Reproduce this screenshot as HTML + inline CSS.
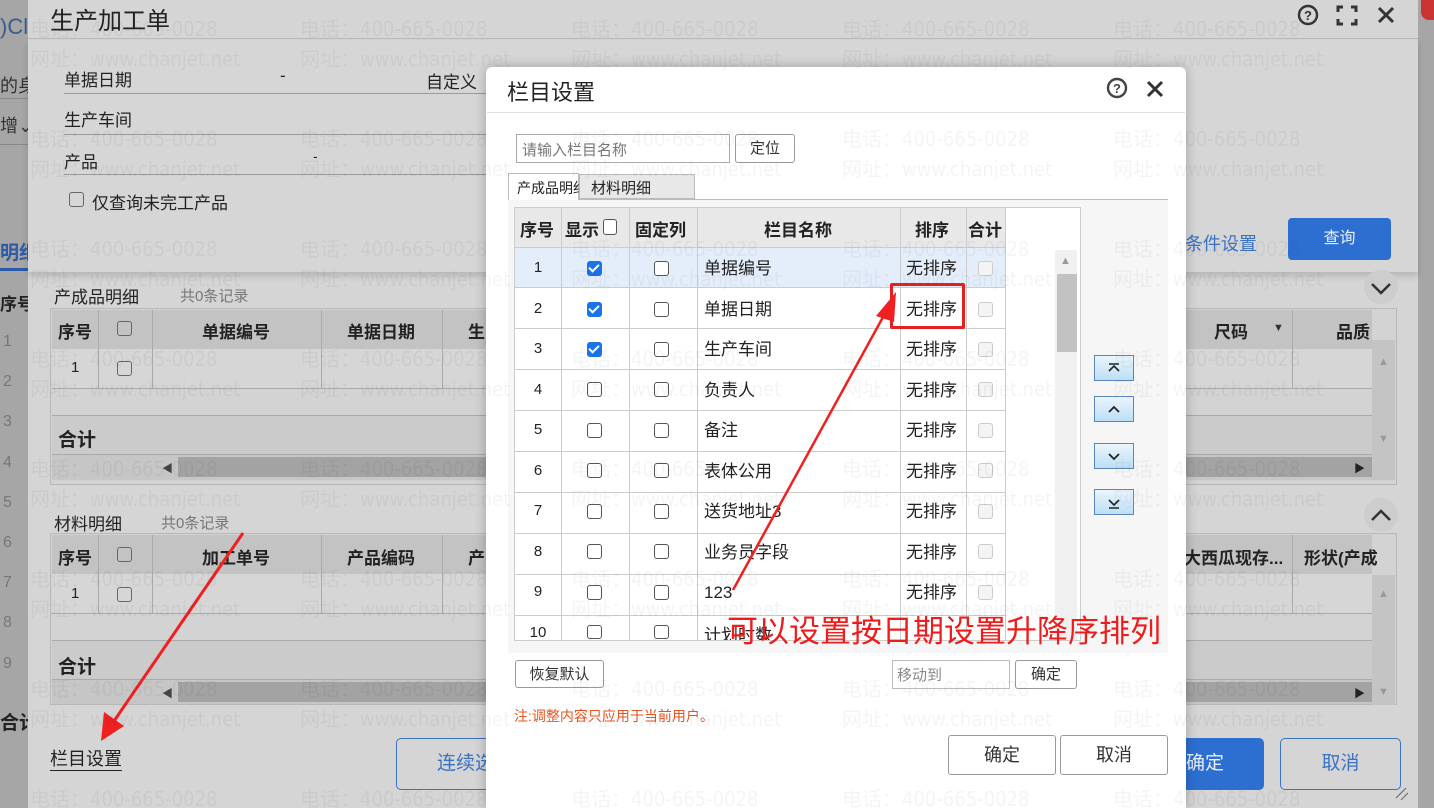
<!DOCTYPE html>
<html><head><meta charset="utf-8"><style>
*{box-sizing:border-box;margin:0;padding:0}
html,body{width:1434px;height:808px;overflow:hidden}
body{position:relative;background:#9c9c9c;font-family:"Liberation Sans","Noto Sans CJK SC",sans-serif;color:#222}
.a{position:absolute;white-space:nowrap}
.cb{position:absolute;width:15px;height:15px;border:1.5px solid #555;border-radius:3px;background:#fff}
.cbd{border-color:#666;background:transparent}
.ck{position:absolute;width:15px;height:15px;border-radius:3px;background:#1a73e8}
.ck:after{content:"";position:absolute;left:4px;top:1px;width:4px;height:8px;border:solid #fff;border-width:0 2px 2px 0;transform:rotate(45deg)}
.cl{position:absolute;width:15px;height:15px;border:1px solid #ccc;border-radius:3px;background:#f4f4f4}
.hd{font-weight:bold;font-size:17px}
.btn{position:absolute;border:1px solid #999;border-radius:3px;background:#fff;text-align:center;font-size:15px;color:#333}
.mv{position:absolute;left:1094px;width:40px;height:26px;border:1px solid #5a86b8;background:linear-gradient(#eaf5fd,#bcdff6)}
</style></head><body>
<div class="a" style="left:0;top:0;width:28px;height:808px;background:#a6a6a6"></div>
<div class="a" style="left:0;top:14px;font-size:22px;color:#3a5c8c">)Cl</div>
<div class="a" style="left:0;top:72px;font-size:18px;color:#333">的身</div>
<div class="a" style="left:0;top:112px;font-size:18px;color:#333">增⌄</div>
<div class="a" style="left:0;top:98px;width:28px;height:1px;background:#888"></div>
<div class="a" style="left:0;top:144px;width:28px;height:1px;background:#888"></div>
<div class="a" style="left:0;top:238px;font-size:19px;color:#2a5aa8;font-weight:bold">明细</div>
<div class="a" style="left:0;top:268px;width:28px;height:3px;background:#2a5aa8"></div>
<div class="a" style="left:0;top:290px;font-size:17px;font-weight:bold">序号</div>
<div class="a" style="left:3px;top:322px;font-size:16px;color:#777;line-height:40.2px">1<br>2<br>3<br>4<br>5<br>6<br>7<br>8<br>9</div>
<div class="a" style="left:0;top:708px;font-size:19px;font-weight:bold">合计</div>
<div class="a" style="left:1418px;top:0;width:16px;height:808px;background:#a6a6a6"></div>
<div class="a" style="left:1421px;top:0;width:13px;height:20px;background:#c33;border-radius:0 0 0 8px"></div>
<div class="a" style="left:28px;top:0;width:1390px;height:808px;background:#d5d5d5"></div>
<div class="a" style="left:50px;top:1px;font-size:24px;color:#222">生产加工单</div>
<div class="a" style="left:28px;top:38px;width:1390px;height:1px;background:#b9b9b9"></div>
<svg class="a" style="left:1294px;top:3px" width="110" height="26" viewBox="0 0 110 26"><circle cx="14" cy="12" r="9" fill="none" stroke="#333" stroke-width="2.4"/><text x="14" y="17" font-size="13" font-weight="bold" text-anchor="middle" fill="#333" font-family="Liberation Sans">?</text><path d="M44 9V4h5M57 4h5v5M62 16v5h-5M49 21h-5v-5" fill="none" stroke="#333" stroke-width="3"/><path d="M85 5l14 14M99 5L85 19" stroke="#333" stroke-width="3"/></svg>
<div class="a" style="left:28px;top:40px;width:1390px;height:232px;background:#d6d6d6;box-shadow:0 4px 6px rgba(0,0,0,.15)"></div>
<div class="a" style="left:64px;top:66px;font-size:17px">单据日期</div>
<div class="a" style="left:280px;top:66px;font-size:17px">-</div>
<div class="a" style="left:426px;top:68px;font-size:17px">自定义</div>
<div class="a" style="left:64px;top:93px;width:422px;height:1px;background:#9a9a9a"></div>
<div class="a" style="left:64px;top:106px;font-size:17px">生产车间</div>
<div class="a" style="left:64px;top:134px;width:422px;height:1px;background:#9a9a9a"></div>
<div class="a" style="left:64px;top:148px;font-size:17px">产品</div>
<div class="a" style="left:313px;top:148px;font-size:14px">-</div>
<div class="a" style="left:64px;top:174px;width:422px;height:1px;background:#9a9a9a"></div>
<div class="cb cbd" style="left:69px;top:192px"></div>
<div class="a" style="left:92px;top:189px;font-size:17px">仅查询未完工产品</div>
<div class="a" style="left:1185px;top:230px;font-size:18px;color:#3b73c4">条件设置</div>
<div class="a" style="left:1288px;top:218px;width:103px;height:42px;background:#2c6fd1;border-radius:4px;color:#e8eef8;font-size:16px;text-align:center;line-height:42px">查询</div>
<div class="a" style="left:1364px;top:498px;width:34px;height:34px;border-radius:17px;background:#cdcdcd"></div>
<svg class="a" style="left:1369px;top:505px" width="24" height="20"><path d="M3 15l9-9 9 9" fill="none" stroke="#333" stroke-width="2.5"/></svg>
<div class="a" style="left:1364px;top:270px;width:34px;height:34px;border-radius:17px;background:#cdcdcd"></div>
<svg class="a" style="left:1369px;top:278px" width="24" height="20"><path d="M3 6l9 9 9-9" fill="none" stroke="#333" stroke-width="2.5"/></svg>
<div class="a" style="left:54px;top:283px;font-size:17px">产成品明细</div>
<div class="a" style="left:180px;top:285px;font-size:15px;color:#777">共0条记录</div>
<div class="a" style="left:50px;top:308px;width:1347px;height:177px;border:1px solid #b8b8b8;background:#d3d3d3"></div>
<div class="a" style="left:52px;top:310px;width:1320px;height:39px;background:#c3c3c3"></div>
<div class="a" style="left:52px;top:349px;width:1320px;height:40px;background:#d6d6d6;border-bottom:1px solid #aaa"></div>
<div class="a" style="left:52px;top:415px;width:1320px;height:40px;background:#cbcbcb;border-top:1px solid #aaa;border-bottom:1px solid #aaa"></div>
<div class="a" style="left:52px;top:455px;width:1320px;height:25px;background:#c6c6c6"></div>
<div class="a" style="left:178px;top:457px;width:1194px;height:20px;background:#a3a3a3"></div>
<div class="a" style="left:162px;top:460px;font-size:11px;color:#444">◀</div>
<div class="a" style="left:1354px;top:460px;font-size:11px;color:#222">▶</div>
<div class="a" style="left:1372px;top:340px;width:23px;height:140px;background:#c4c4c4"></div>
<div class="a" style="left:1378px;top:356px;font-size:11px;color:#999">▲</div>
<div class="a" style="left:1378px;top:433px;font-size:11px;color:#999">▼</div>
<div class="a" style="left:98px;top:310px;width:1px;height:79px;background:#aaa"></div>
<div class="a" style="left:152px;top:310px;width:1px;height:79px;background:#aaa"></div>
<div class="a" style="left:321px;top:310px;width:1px;height:79px;background:#aaa"></div>
<div class="a" style="left:442px;top:310px;width:1px;height:79px;background:#aaa"></div>
<div class="a" style="left:1292px;top:310px;width:1px;height:79px;background:#aaa"></div>
<div class="a hd" style="left:58px;top:318px">序号</div>
<div class="cb cbd" style="left:117px;top:321px"></div>
<div class="a hd" style="left:202px;top:318px">单据编号</div>
<div class="a hd" style="left:347px;top:318px">单据日期</div>
<div class="a hd" style="left:468px;top:318px">生</div>
<div class="a hd" style="left:1214px;top:318px">尺码</div>
<div class="a" style="left:1273px;top:322px;font-size:11px;color:#333">▼</div>
<div class="a hd" style="left:1336px;top:318px">品质</div>
<div class="a" style="left:71px;top:359px;font-size:15px">1</div>
<div class="cb cbd" style="left:117px;top:361px"></div>
<div class="a hd" style="left:58px;top:425px;font-size:19px">合计</div>
<div class="a" style="left:54px;top:510px;font-size:17px">材料明细</div>
<div class="a" style="left:161px;top:512px;font-size:15px;color:#777">共0条记录</div>
<div class="a" style="left:50px;top:533px;width:1347px;height:172px;border:1px solid #b8b8b8;background:#d3d3d3"></div>
<div class="a" style="left:52px;top:535px;width:1320px;height:39px;background:#c3c3c3"></div>
<div class="a" style="left:52px;top:574px;width:1320px;height:40px;background:#d6d6d6;border-bottom:1px solid #aaa"></div>
<div class="a" style="left:52px;top:640px;width:1320px;height:40px;background:#cbcbcb;border-top:1px solid #aaa;border-bottom:1px solid #aaa"></div>
<div class="a" style="left:52px;top:680px;width:1320px;height:24px;background:#c6c6c6"></div>
<div class="a" style="left:178px;top:682px;width:1194px;height:20px;background:#a3a3a3"></div>
<div class="a" style="left:162px;top:685px;font-size:11px;color:#444">◀</div>
<div class="a" style="left:1354px;top:685px;font-size:11px;color:#222">▶</div>
<div class="a" style="left:1372px;top:575px;width:23px;height:130px;background:#c4c4c4"></div>
<div class="a" style="left:1378px;top:588px;font-size:11px;color:#999">▲</div>
<div class="a" style="left:1378px;top:686px;font-size:11px;color:#999">▼</div>
<div class="a" style="left:98px;top:535px;width:1px;height:79px;background:#aaa"></div>
<div class="a" style="left:152px;top:535px;width:1px;height:79px;background:#aaa"></div>
<div class="a" style="left:321px;top:535px;width:1px;height:79px;background:#aaa"></div>
<div class="a" style="left:442px;top:535px;width:1px;height:79px;background:#aaa"></div>
<div class="a" style="left:1292px;top:535px;width:1px;height:79px;background:#aaa"></div>
<div class="a hd" style="left:58px;top:544px">序号</div>
<div class="cb cbd" style="left:117px;top:547px"></div>
<div class="a hd" style="left:202px;top:544px">加工单号</div>
<div class="a hd" style="left:347px;top:544px">产品编码</div>
<div class="a hd" style="left:468px;top:544px">产</div>
<div class="a hd" style="left:1184px;top:544px">大西瓜现存...</div>
<div class="a hd" style="left:1304px;top:544px">形状(产成</div>
<div class="a" style="left:71px;top:585px;font-size:15px">1</div>
<div class="cb cbd" style="left:117px;top:587px"></div>
<div class="a hd" style="left:58px;top:652px;font-size:19px">合计</div>
<div class="a" style="left:50px;top:748px;font-size:18px;border-bottom:1px solid #222;line-height:22px">栏目设置</div>
<div class="a" style="left:396px;top:738px;width:120px;height:52px;border:1px solid #3b73c4;border-radius:5px;color:#3b73c4;font-size:19px;line-height:50px;padding-left:40px">连续选</div>
<div class="a" style="left:1150px;top:738px;width:114px;height:52px;background:#2c6fd1;border-radius:5px;color:#e8eef8;font-size:19px;line-height:52px;padding-left:36px">确定</div>
<div class="a" style="left:1280px;top:738px;width:121px;height:52px;border:1px solid #3b73c4;border-radius:5px;color:#3b73c4;font-size:19px;line-height:50px;text-align:center">取消</div>
<!-- inner modal -->
<div class="a" style="left:486px;top:67px;width:700px;height:741px;background:#fff;border-radius:6px 6px 0 0;box-shadow:0 0 12px rgba(0,0,0,.25)"></div>
<div class="a" style="left:507px;top:75px;font-size:22px;color:#222">栏目设置</div>
<div class="a" style="left:487px;top:112px;width:698px;height:1px;background:#e2e2e2"></div>
<svg class="a" style="left:1104px;top:76px" width="70" height="26"><circle cx="13" cy="12" r="9" fill="none" stroke="#444" stroke-width="2.4"/><text x="13" y="17" font-size="13" font-weight="bold" text-anchor="middle" fill="#444" font-family="Liberation Sans">?</text><path d="M44 6l14 14M58 6L44 20" stroke="#333" stroke-width="3"/></svg>
<div class="a" style="left:516px;top:134px;width:214px;height:29px;border:1px solid #aaa;font-size:15px;color:#777;padding:4px 5px">请输入栏目名称</div>
<div class="btn" style="left:735px;top:134px;width:60px;height:29px;line-height:27px">定位</div>
<div class="a" style="left:508px;top:199px;width:660px;height:454px;background:#f6f6f6"></div>
<div class="a" style="left:508px;top:199px;width:660px;height:1px;background:#bbb"></div>
<div class="a" style="left:508px;top:173px;width:71px;height:27px;background:#fff;border:1px solid #bbb;border-bottom:none;font-size:14px;padding:4px 0 0 8px">产成品明细</div>
<div class="a" style="left:579px;top:174px;width:116px;height:25px;background:#e8e8e8;border:1px solid #bbb;font-size:15px;padding:2px 0 0 11px">材料明细</div>
<div class="a" style="left:514px;top:207px;width:567px;height:434px;border:1px solid #ccc;background:#fff"></div>
<div class="a" style="left:515px;top:208px;width:490px;height:40px;background:#e8e8e8"></div>
<div class="a" style="left:515px;top:248px;width:490px;height:40px;background:#e4eefb"></div>
<div class="a" style="left:515px;top:247px;width:490px;height:393px;background:repeating-linear-gradient(#0000 0 40px,#ccc 40px 41px)"></div>
<div class="a" style="left:561px;top:208px;width:1px;height:432px;background:#ccc"></div>
<div class="a" style="left:629px;top:208px;width:1px;height:432px;background:#ccc"></div>
<div class="a" style="left:697px;top:208px;width:1px;height:432px;background:#ccc"></div>
<div class="a" style="left:900px;top:208px;width:1px;height:432px;background:#ccc"></div>
<div class="a" style="left:966px;top:208px;width:1px;height:432px;background:#ccc"></div>
<div class="a" style="left:1005px;top:208px;width:1px;height:432px;background:#ccc"></div>
<div class="a" style="left:515px;top:247px;width:490px;height:1px;background:#ccc"></div>
<div class="a hd" style="left:520px;top:216px">序号</div>
<div class="a hd" style="left:565px;top:216px">显示</div>
<div class="cb" style="left:603px;top:219px;width:14px;height:16px"></div>
<div class="a hd" style="left:635px;top:216px">固定列</div>
<div class="a hd" style="left:764px;top:216px">栏目名称</div>
<div class="a hd" style="left:915px;top:216px">排序</div>
<div class="a hd" style="left:968px;top:216px">合计</div>
<div class="a" style="left:528px;top:248px;width:20px;text-align:center;font-size:15px;line-height:40.5px">1<br>2<br>3<br>4<br>5<br>6<br>7<br>8<br>9<br>10</div>
<div class="ck" style="left:587px;top:261px"></div>
<div class="ck" style="left:587px;top:302px"></div>
<div class="ck" style="left:587px;top:342px"></div>
<div class="cb" style="left:587px;top:382px"></div><div class="cb" style="left:587px;top:423px"></div><div class="cb" style="left:587px;top:463px"></div><div class="cb" style="left:587px;top:504px"></div><div class="cb" style="left:587px;top:544px"></div><div class="cb" style="left:587px;top:585px"></div><div class="cb" style="left:587px;top:625px;height:14px"></div>
<div class="cb" style="left:654px;top:261px"></div><div class="cb" style="left:654px;top:302px"></div><div class="cb" style="left:654px;top:342px"></div><div class="cb" style="left:654px;top:382px"></div><div class="cb" style="left:654px;top:423px"></div><div class="cb" style="left:654px;top:463px"></div><div class="cb" style="left:654px;top:504px"></div><div class="cb" style="left:654px;top:544px"></div><div class="cb" style="left:654px;top:585px"></div><div class="cb" style="left:654px;top:625px;height:14px"></div>
<div class="a" style="left:704px;top:249px;font-size:17px;line-height:40.5px">单据编号<br>单据日期<br>生产车间<br>负责人<br>备注<br>表体公用<br>送货地址3<br>业务员字段<br>123</div>
<div class="a" style="left:906px;top:249px;font-size:17px;line-height:40.5px">无排序<br>无排序<br>无排序<br>无排序<br>无排序<br>无排序<br>无排序<br>无排序<br>无排序</div>
<div class="cl" style="left:978px;top:261px"></div><div class="cl" style="left:978px;top:302px"></div><div class="cl" style="left:978px;top:342px"></div><div class="cl" style="left:978px;top:382px"></div><div class="cl" style="left:978px;top:423px"></div><div class="cl" style="left:978px;top:463px"></div><div class="cl" style="left:978px;top:504px"></div><div class="cl" style="left:978px;top:544px"></div><div class="cl" style="left:978px;top:585px"></div>
<div class="a" style="left:704px;top:621px;font-size:17px;height:19px;overflow:hidden">计划时数</div>
<div class="a" style="left:1055px;top:250px;width:22px;height:390px;background:#f0f0f0"></div>
<div class="a" style="left:1057px;top:274px;width:20px;height:78px;background:#c2c2c2"></div>
<div class="a" style="left:1060px;top:255px;font-size:11px;color:#999">▲</div>
<div class="a" style="left:890px;top:283px;width:75px;height:46px;border:3px solid #e52020;border-radius:2px"></div>
<div class="mv" style="top:355px"><svg width="38" height="24"><path d="M14 8h10M14 15l5-5 5 5" fill="none" stroke="#222" stroke-width="1.6"/></svg></div>
<div class="mv" style="top:396px"><svg width="38" height="24"><path d="M14 15l5-5 5 5" fill="none" stroke="#222" stroke-width="1.8"/></svg></div>
<div class="mv" style="top:443px"><svg width="38" height="24"><path d="M14 10l5 5 5-5" fill="none" stroke="#222" stroke-width="1.8"/></svg></div>
<div class="mv" style="top:489px"><svg width="38" height="24"><path d="M14 10l5 5 5-5M14 18h10" fill="none" stroke="#222" stroke-width="1.6"/></svg></div>
<div class="btn" style="left:515px;top:660px;width:89px;height:28px;line-height:27px">恢复默认</div>
<div class="a" style="left:892px;top:660px;width:118px;height:29px;border:1px solid #bbb;font-size:15px;color:#888;padding:3px 4px">移动到</div>
<div class="btn" style="left:1015px;top:660px;width:62px;height:29px;line-height:27px">确定</div>
<div class="a" style="left:514px;top:706px;font-size:14px;color:#e85420">注:调整内容只应用于当前用户。</div>
<div class="btn" style="left:948px;top:735px;width:108px;height:40px;line-height:38px;font-size:18px">确定</div>
<div class="btn" style="left:1060px;top:735px;width:108px;height:40px;line-height:38px;font-size:18px">取消</div>
<div class="a" style="left:727px;top:612px;font-size:31px;color:#ee1c1c;line-height:40px">可以设置按日期设置升降序排列</div>
<svg class="a" style="left:0;top:0" width="1434" height="808">
<path d="M733 590L888 308" stroke="#f02020" stroke-width="2.5"/>
<path d="M896 292L876 316L894 322Z" fill="#f02020"/>
<path d="M243 533L112 724" stroke="#f02020" stroke-width="3"/>
<path d="M101 741L104 712L124 726Z" fill="#f02020"/>
<g font-family="DejaVu Sans Condensed, Noto Sans CJK SC, sans-serif" font-size="20" fill="#000" fill-opacity="0.045">
<text x="30" y="36">电话：400-665-0028</text><text x="300" y="36">电话：400-665-0028</text><text x="571" y="36">电话：400-665-0028</text><text x="842" y="36">电话：400-665-0028</text><text x="1113" y="36">电话：400-665-0028</text>
<text x="30" y="66">网址：www.chanjet.net</text><text x="300" y="66">网址：www.chanjet.net</text><text x="571" y="66">网址：www.chanjet.net</text><text x="842" y="66">网址：www.chanjet.net</text><text x="1113" y="66">网址：www.chanjet.net</text>
<text x="30" y="146">电话：400-665-0028</text><text x="300" y="146">电话：400-665-0028</text><text x="571" y="146">电话：400-665-0028</text><text x="842" y="146">电话：400-665-0028</text><text x="1113" y="146">电话：400-665-0028</text>
<text x="30" y="176">网址：www.chanjet.net</text><text x="300" y="176">网址：www.chanjet.net</text><text x="571" y="176">网址：www.chanjet.net</text><text x="842" y="176">网址：www.chanjet.net</text><text x="1113" y="176">网址：www.chanjet.net</text>
<text x="30" y="256">电话：400-665-0028</text><text x="300" y="256">电话：400-665-0028</text><text x="571" y="256">电话：400-665-0028</text><text x="842" y="256">电话：400-665-0028</text><text x="1113" y="256">电话：400-665-0028</text>
<text x="30" y="286">网址：www.chanjet.net</text><text x="300" y="286">网址：www.chanjet.net</text><text x="571" y="286">网址：www.chanjet.net</text><text x="842" y="286">网址：www.chanjet.net</text><text x="1113" y="286">网址：www.chanjet.net</text>
<text x="30" y="366">电话：400-665-0028</text><text x="300" y="366">电话：400-665-0028</text><text x="571" y="366">电话：400-665-0028</text><text x="842" y="366">电话：400-665-0028</text><text x="1113" y="366">电话：400-665-0028</text>
<text x="30" y="396">网址：www.chanjet.net</text><text x="300" y="396">网址：www.chanjet.net</text><text x="571" y="396">网址：www.chanjet.net</text><text x="842" y="396">网址：www.chanjet.net</text><text x="1113" y="396">网址：www.chanjet.net</text>
<text x="30" y="476">电话：400-665-0028</text><text x="300" y="476">电话：400-665-0028</text><text x="571" y="476">电话：400-665-0028</text><text x="842" y="476">电话：400-665-0028</text><text x="1113" y="476">电话：400-665-0028</text>
<text x="30" y="506">网址：www.chanjet.net</text><text x="300" y="506">网址：www.chanjet.net</text><text x="571" y="506">网址：www.chanjet.net</text><text x="842" y="506">网址：www.chanjet.net</text><text x="1113" y="506">网址：www.chanjet.net</text>
<text x="30" y="586">电话：400-665-0028</text><text x="300" y="586">电话：400-665-0028</text><text x="571" y="586">电话：400-665-0028</text><text x="842" y="586">电话：400-665-0028</text><text x="1113" y="586">电话：400-665-0028</text>
<text x="30" y="616">网址：www.chanjet.net</text><text x="300" y="616">网址：www.chanjet.net</text><text x="571" y="616">网址：www.chanjet.net</text><text x="842" y="616">网址：www.chanjet.net</text><text x="1113" y="616">网址：www.chanjet.net</text>
<text x="30" y="696">电话：400-665-0028</text><text x="300" y="696">电话：400-665-0028</text><text x="571" y="696">电话：400-665-0028</text><text x="842" y="696">电话：400-665-0028</text><text x="1113" y="696">电话：400-665-0028</text>
<text x="30" y="726">网址：www.chanjet.net</text><text x="300" y="726">网址：www.chanjet.net</text><text x="571" y="726">网址：www.chanjet.net</text><text x="842" y="726">网址：www.chanjet.net</text><text x="1113" y="726">网址：www.chanjet.net</text>
<text x="30" y="806">电话：400-665-0028</text><text x="300" y="806">电话：400-665-0028</text><text x="571" y="806">电话：400-665-0028</text><text x="842" y="806">电话：400-665-0028</text><text x="1113" y="806">电话：400-665-0028</text>
</g>
<path d="M1396 798l10-10M1401 800l7-7" stroke="#666" stroke-width="1"/>
</svg>
</body></html>
